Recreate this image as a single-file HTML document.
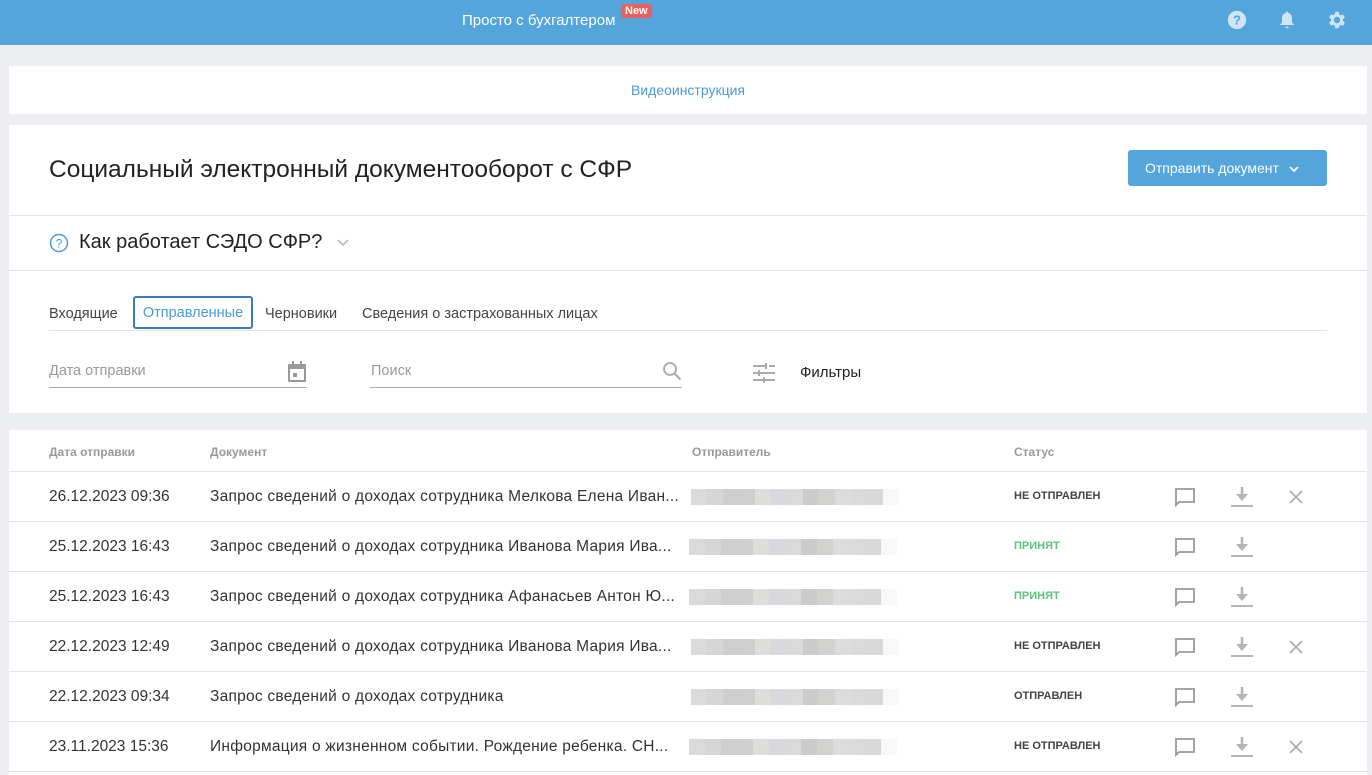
<!DOCTYPE html>
<html><head><meta charset="utf-8"><style>
*{box-sizing:border-box;margin:0;padding:0}
html,body{width:1372px;height:775px;overflow:hidden}
body{background:#eceef1;font-family:"Liberation Sans","Noto Sans CJK SC",sans-serif;color:#333;position:relative}
.abs{position:absolute}
.hdr{left:0;top:0;width:1372px;height:45px;background:#53a5dc}
.card{background:#fff;left:9px;width:1358px}
.row{left:9px;width:1358px;height:1px;background:#e4e4e4}
.t{position:absolute;white-space:nowrap}
.blur{position:absolute;height:16px;display:flex}
.blur i{display:block;height:16px;width:16px}
.st{font-size:11px;font-weight:bold}
</style></head><body>
<div class="abs hdr">
 <div class="t" style="left:462px;top:12px;color:#fff;font-size:15px">Просто с бухгалтером</div>
 <div class="t" style="left:621px;top:4px;background:#e9605c;color:#fff;font-size:11px;font-weight:bold;padding:1px 4px;border-radius:3px">New</div>
 <svg class="abs" style="left:1227px;top:10px" width="20" height="20" viewBox="0 0 24 24"><circle cx="12" cy="12" r="11" fill="#cfe5f5"/><text x="12" y="17.5" text-anchor="middle" font-size="16" font-weight="bold" fill="#53a5dc" font-family="Liberation Sans">?</text></svg>
 <svg class="abs" style="left:1277px;top:9px" width="20" height="22" viewBox="0 0 24 24"><path d="M12 2c1 0 1.5.7 1.5 1.5C16.5 4.3 18 7 18 10v5l2 2v1H4v-1l2-2v-5c0-3 1.5-5.7 4.5-6.5C10.5 2.7 11 2 12 2zM10 20h4a2 2 0 01-4 0z" fill="#cfe5f5"/></svg>
 <svg class="abs" style="left:1326px;top:9px" width="22" height="22" viewBox="0 0 24 24"><path fill="#cfe5f5" d="M19.4 13a7.5 7.5 0 000-2l2.1-1.6-2-3.5-2.5 1a7 7 0 00-1.7-1L15 3h-4l-.4 2.7a7 7 0 00-1.7 1l-2.5-1-2 3.5L6.6 11a7.5 7.5 0 000 2l-2.2 1.6 2 3.5 2.5-1a7 7 0 001.7 1L11 21h4l.4-2.7a7 7 0 001.7-1l2.5 1 2-3.5zM13 15.5a3.5 3.5 0 110-7 3.5 3.5 0 010 7z" transform="translate(-1 0)"/></svg>
</div>
<div class="abs card" style="top:66px;height:48px"><div class="t" style="left:0;width:1358px;text-align:center;top:16px;color:#4a9bd8;font-size:14px">Видеоинструкция</div></div>
<div class="abs card" style="top:125px;height:288px">
 <div class="t" style="left:40px;top:31px;font-size:24.5px;color:#222">Социальный электронный документооборот с СФР</div>
 <div class="t" style="left:1119px;top:25px;width:199px;height:36px;background:#53a5dc;border-radius:3px;color:#fff;font-size:14px;line-height:36px;padding-left:17px">Отправить документ <svg width="10" height="8" viewBox="0 0 10 8" style="margin-left:6px"><path d="M1 2l4 4 4-4" stroke="#fff" stroke-width="1.8" fill="none"/></svg></div>
 <div class="abs" style="left:0;top:90px;width:1358px;height:1px;background:#e4e4e4"></div>
 <svg class="abs" style="left:40px;top:108px" width="20" height="20" viewBox="0 0 20 20"><circle cx="10" cy="10" r="8.5" fill="none" stroke="#4a9bd8" stroke-width="1.5"/><text x="10" y="14.5" text-anchor="middle" font-size="12" fill="#4a9bd8" font-family="Liberation Sans">?</text></svg>
 <div class="t" style="left:70px;top:106px;font-size:20px;color:#222">Как работает СЭДО СФР?</div>
 <svg class="abs" style="left:328px;top:114px" width="12" height="8" viewBox="0 0 12 8"><path d="M1 1l5 5 5-5" stroke="#bbb" stroke-width="1.6" fill="none"/></svg>
 <div class="abs" style="left:0;top:145px;width:1358px;height:1px;background:#e4e4e4"></div>
 <div class="t" style="left:40px;top:181px;font-size:14.5px;color:#444">Входящие</div>
 <div class="t" style="left:124px;top:171px;width:120px;height:33px;border:2px solid #3a7bc0;border-radius:3px;font-size:14.5px;color:#4a9bd8;text-align:center;line-height:31px">Отправленные</div>
 <div class="t" style="left:256px;top:181px;font-size:14.5px;color:#444">Черновики</div>
 <div class="t" style="left:353px;top:181px;font-size:14.5px;color:#444">Сведения о застрахованных лицах</div>
 <div class="abs" style="left:40px;top:205px;width:1278px;height:1px;background:#e4e4e4"></div>
 <div class="t" style="left:40px;top:238px;font-size:14.5px;color:#999">Дата отправки</div>
 <svg class="abs" style="left:278px;top:236px" width="20" height="22" viewBox="0 0 20 22"><rect x="1" y="3" width="18" height="18" rx="1" fill="#999"/><rect x="3" y="8" width="14" height="11" fill="#fff"/><rect x="5" y="0" width="2" height="5" fill="#999"/><rect x="13" y="0" width="2" height="5" fill="#999"/><rect x="6" y="12" width="4" height="4" fill="#999"/></svg>
 <div class="abs" style="left:40px;top:262px;width:258px;height:1px;background:#aaa"></div>
 <div class="t" style="left:362px;top:238px;font-size:14.5px;color:#999">Поиск</div>
 <svg class="abs" style="left:653px;top:236px" width="20" height="20" viewBox="0 0 20 20"><circle cx="8" cy="8" r="6" fill="none" stroke="#aaa" stroke-width="1.8"/><path d="M12.5 12.5l6 6" stroke="#aaa" stroke-width="2"/></svg>
 <div class="abs" style="left:361px;top:262px;width:312px;height:1px;background:#aaa"></div>
 <svg class="abs" style="left:744px;top:238px" width="22" height="20" viewBox="0 0 22 20"><g stroke="#aaa" stroke-width="2"><path d="M0 3h22M0 10h22M0 17h22"/></g><g stroke="#fff" stroke-width="3"><path d="M14 3h2M5 10h2M10 17h2"/></g><g stroke="#aaa" stroke-width="2"><path d="M13 0v6M6 7v6M11 14v6"/></g></svg>
 <div class="t" style="left:791px;top:239px;font-size:15px;color:#222">Фильтры</div>
</div>
<div class="abs card" style="top:430px;height:345px"></div>
<div class="t" style="left:49px;top:445px;font-size:12px;color:#999;font-weight:bold">Дата отправки</div>
<div class="t" style="left:210px;top:445px;font-size:12px;color:#999;font-weight:bold">Документ</div>
<div class="t" style="left:692px;top:445px;font-size:12px;color:#999;font-weight:bold">Отправитель</div>
<div class="t" style="left:1014px;top:445px;font-size:12px;color:#999;font-weight:bold">Статус</div>

<div id="rows"></div>
<script>
var d=[["26.12.2023 09:36","Запрос сведений о доходах сотрудника Мелкова Елена Иван...","НЕ ОТПРАВЛЕН","#444",1,691],
["25.12.2023 16:43","Запрос сведений о доходах сотрудника Иванова Мария Ива...","ПРИНЯТ","#5cc27a",0,689],
["25.12.2023 16:43","Запрос сведений о доходах сотрудника Афанасьев Антон Ю...","ПРИНЯТ","#5cc27a",0,689],
["22.12.2023 12:49","Запрос сведений о доходах сотрудника Иванова Мария Ива...","НЕ ОТПРАВЛЕН","#444",1,691],
["22.12.2023 09:34","Запрос сведений о доходах сотрудника","ОТПРАВЛЕН","#444",0,691],
["23.11.2023 15:36","Информация о жизненном событии. Рождение ребенка. СН...","НЕ ОТПРАВЛЕН","#444",1,689]];
var cols=["#dadada","#d6d6d6","#cdced0","#d0cfcd","#dddddc","#d8d9dc","#dadadb","#cdcccb","#d2d2d0","#dcdcdc","#dadada","#d9d9d9","#f8f8f8"];
var h="";
d.forEach(function(r,i){var y=471+i*50;
h+='<div class="abs row" style="top:'+y+'px"></div>';
h+='<div class="t" style="left:49px;top:'+(y+17)+'px;font-size:15.5px;color:#333">'+r[0]+'</div>';
h+='<div class="t" style="left:210px;top:'+(y+17)+'px;font-size:15.5px;letter-spacing:0.25px;color:#333">'+r[1]+'</div>';
h+='<div class="blur" style="left:'+r[5]+'px;top:'+(y+18)+'px">'+cols.map(function(c){return '<i style="background:'+c+'"></i>'}).join('')+'</div>';
h+='<div class="t st" style="left:1014px;top:'+(y+19)+'px;color:'+r[3]+'">'+r[2]+'</div>';
h+='<svg class="abs" style="left:1174px;top:'+(y+16)+'px" width="22" height="22" viewBox="0 0 22 22"><path d="M2 2h18v13H5l-3 3z" fill="none" stroke="#999" stroke-width="1.8"/></svg>';
h+='<svg class="abs" style="left:1231px;top:'+(y+14)+'px" width="22" height="24" viewBox="0 0 22 24"><path d="M11 2v11" stroke="#b5b5b5" stroke-width="2.5"/><path d="M5 9h12l-6 7z" fill="#b5b5b5"/><path d="M0 21h22" stroke="#b5b5b5" stroke-width="2"/></svg>';
if(r[4])h+='<svg class="abs" style="left:1289px;top:'+(y+19)+'px" width="14" height="14" viewBox="0 0 14 14"><path d="M1 1l12 12M13 1L1 13" stroke="#aaa" stroke-width="1.6"/></svg>';
});
h+='<div class="abs row" style="top:771px"></div>';
document.getElementById("rows").innerHTML=h;
</script>
</body></html>
